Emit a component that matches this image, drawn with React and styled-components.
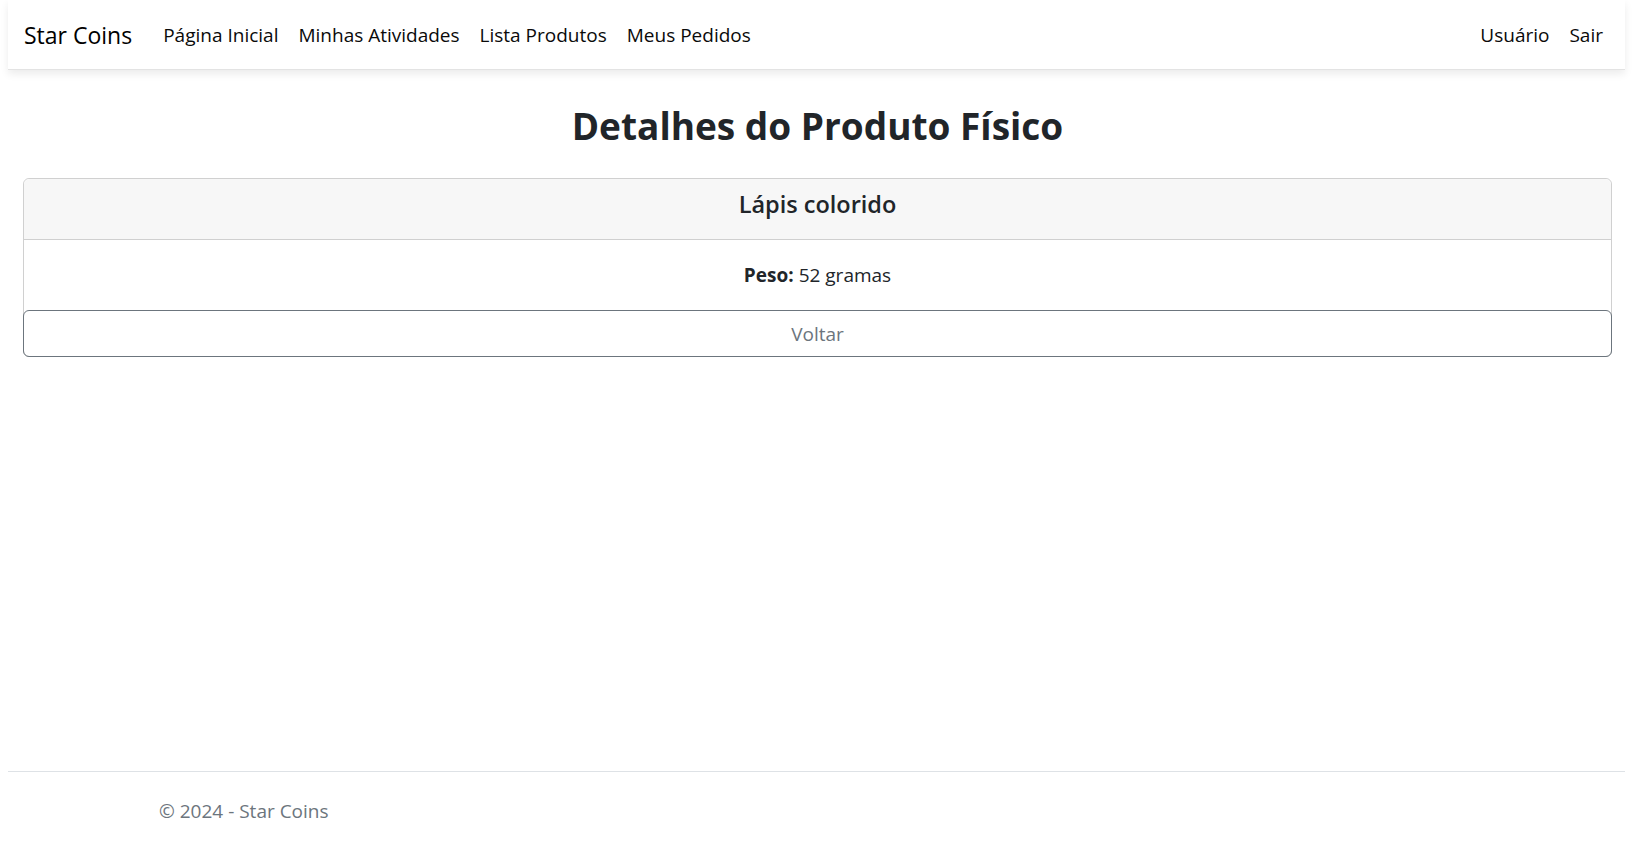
import styled, { createGlobalStyle } from "styled-components";

const GlobalStyle = createGlobalStyle`
  html, body {
    margin: 0;
    padding: 0;
    background: #fff;
  }
  body {
    font-family: "Open Sans", "Noto Sans", sans-serif;
    color: #212529;
    font-size: 19px;
  }
  #root {
    min-height: 846px;
    display: flex;
    flex-direction: column;
  }
`;

function App() {
  return (
    <Page>
      <GlobalStyle />
      <Navbar>
        <Brand href="#">Star Coins</Brand>
        <NavLinks>
          <NavLink href="#">Página Inicial</NavLink>
          <NavLink href="#">Minhas Atividades</NavLink>
          <NavLink href="#">Lista Produtos</NavLink>
          <NavLink href="#">Meus Pedidos</NavLink>
        </NavLinks>
        <RightLinks>
          <NavLink href="#">Usuário</NavLink>
          <NavLink href="#">Sair</NavLink>
        </RightLinks>
      </Navbar>
      <Main>
        <Title>Detalhes do Produto Físico</Title>
        <Card>
          <CardHeader>Lápis colorido</CardHeader>
          <CardBody>
            <strong>Peso:</strong> 52 gramas
          </CardBody>
          <BackButton>Voltar</BackButton>
        </Card>
      </Main>
      <Footer>
        <FooterInner>© 2024 - Star Coins</FooterInner>
      </Footer>
    </Page>
  );
}
export default App;

const Page = styled.div`
  flex: 1;
  display: flex;
  flex-direction: column;
`;
const Navbar = styled.nav`
  margin: 0 8px;
  height: 70px;
  display: flex;
  align-items: center;
  padding: 0 12px 0 16px;
  background: #fff;
  box-shadow: 0 0.25rem 0.5rem rgba(0, 0, 0, 0.08);
  border-bottom: 1px solid #e3e3e3;
  box-sizing: border-box;
`;
const Brand = styled.a`
  font-size: 23px;
  color: #000;
  text-decoration: none;
  margin-right: 21px;
  padding-top: 1px;
`;
const NavLinks = styled.div`
  display: flex;
  align-items: center;
  flex: 1;
`;
const RightLinks = styled.div`
  display: flex;
  align-items: center;
`;
const NavLink = styled.a`
  font-size: 19px;
  color: #0a0a0a;
  text-decoration: none;
  padding: 0 10px;
`;
const Main = styled.main`
  flex: 1;
  padding: 0 21px 0 23px;
`;
const Title = styled.h1`
  text-align: center;
  font-size: 37px;
  font-weight: 700;
  margin: 34px 0 30px;
  line-height: 1.2;
  color: #212529;
`;
const Card = styled.div`
  border: 1px solid #d0d0d0;
  border-radius: 6px;
  display: flex;
  flex-direction: column;
`;
const CardHeader = styled.h4`
  margin: 0;
  background: #f7f7f7;
  border-bottom: 1px solid #d0d0d0;
  border-radius: 6px 6px 0 0;
  text-align: center;
  font-size: 23.5px;
  font-weight: 600;
  height: 61px;
  box-sizing: border-box;
  padding-bottom: 10px;
  display: flex;
  align-items: center;
  justify-content: center;
`;
const CardBody = styled.div`
  height: 70px;
  display: flex;
  align-items: center;
  justify-content: center;
  gap: 5px;
  font-size: 19px;
  strong {
    font-weight: 700;
  }
`;
const BackButton = styled.button`
  margin: 0 -1px -1px;
  height: 47px;
  border: 1px solid #6c757d;
  border-radius: 6px;
  background: transparent;
  color: #6c757d;
  font-family: inherit;
  font-size: 19px;
  cursor: pointer;
`;
const Footer = styled.footer`
  margin: 0 8px;
  border-top: 1px solid #dee2e6;
  height: 74px;
  display: flex;
  align-items: center;
`;
const FooterInner = styled.div`
  width: 100%;
  max-width: 1315px;
  margin: 0 auto;
  color: #6c757d;
  font-size: 19px;
  padding-top: 3px;
`;
